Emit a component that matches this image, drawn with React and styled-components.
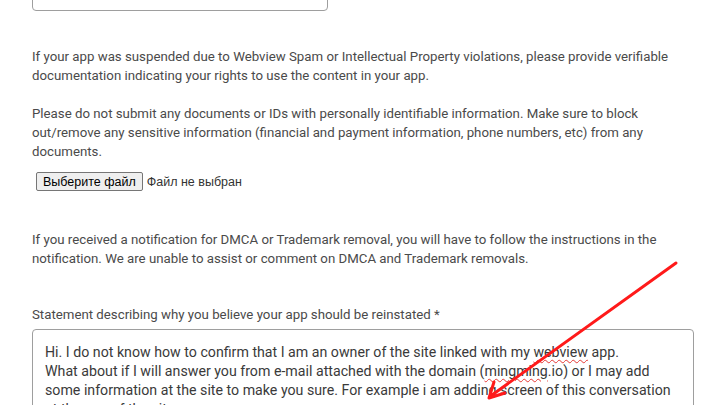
import React from "react";
import styled, { createGlobalStyle } from "styled-components";

const GlobalStyle = createGlobalStyle`
  html, body {
    margin: 0;
    padding: 0;
    background: #ffffff;
    overflow: hidden;
  }
  body {
    font-family: Roboto, "Noto Sans", Arial, sans-serif;
  }
`;

const Page = styled.div`
  position: relative;
  width: 720px;
  height: 405px;
  overflow: hidden;
  padding: 0 0 0 32px;
  box-sizing: border-box;
`;

const Form = styled.div`
  width: 662px;
  display: flex;
  flex-direction: column;
`;

const TopInput = styled.div`
  width: 296px;
  height: 30px;
  margin-top: -19px;
  box-sizing: border-box;
  border: 1px solid #9e9e9e;
  border-radius: 4px;
`;

const Text = styled.p`
  max-width: 640px;
  margin: ${(p) => p.$top || 0}px 0 0;
  font-size: 13.25px;
  line-height: 19px;
  color: #4a4a4a;
`;

const FileRow = styled.div`
  display: flex;
  align-items: center;
  gap: 4px;
  margin: 11px 0 0 4px;
  font-family: "Liberation Sans", Arial, sans-serif;
  font-size: 12.5px;
`;

const FileButton = styled.button`
  height: 19px;
  padding: 0 6px;
  font-family: "Liberation Sans", Arial, sans-serif;
  font-size: 12.5px;
  color: #000;
  background: #efefef;
  border: 1px solid #767676;
  border-radius: 2px;
`;

const FileLabel = styled.span`
  color: #333;
`;

const TextBox = styled.div`
  margin-top: 5px;
  width: 662px;
  height: 120px;
  box-sizing: border-box;
  padding: 13px 8px 0 12px;
  border: 1px solid #9e9e9e;
  border-radius: 4px;
  font-size: 14.2px;
  line-height: 19px;
  color: #3a3a3a;
  white-space: nowrap;
  overflow: hidden;
`;

const Misspelled = styled.span`
  text-decoration: underline wavy #e53935;
  text-decoration-thickness: 1px;
  text-underline-offset: 2px;
`;

const Arrow = styled.svg`
  position: absolute;
  left: 0;
  top: 0;
  pointer-events: none;
`;

export default function App() {
  return (
    <Page>
      <GlobalStyle />
      <Form>
        <TopInput />
        <Text $top={36}>
          If your app was suspended due to Webview Spam or Intellectual Property violations, please provide verifiable
          documentation indicating your rights to use the content in your app.
        </Text>
        <Text $top={19}>
          Please do not submit any documents or IDs with personally identifiable information. Make sure to block
          out/remove any sensitive information (financial and payment information, phone numbers, etc) from any
          documents.
        </Text>
        <FileRow>
          <FileButton type="button">Выберите файл</FileButton>
          <FileLabel>Файл не выбран</FileLabel>
        </FileRow>
        <Text $top={39}>
          If you received a notification for DMCA or Trademark removal, you will have to follow the instructions in the
          notification. We are unable to assist or comment on DMCA and Trademark removals.
        </Text>
        <Text $top={37}>Statement describing why you believe your app should be reinstated *</Text>
        <TextBox>
          Hi. I do not know how to confirm that I am an owner of the site linked with my <Misspelled>webview</Misspelled> app.
          <br />
          What about if I will answer you from e-mail attached with the domain (<Misspelled>mingming</Misspelled>.io) or I may add
          <br />
          some information at the site to make you sure. For example i am adding screen of this conversation
          <br />
          at the one of the site.
        </TextBox>
      </Form>
      <Arrow width="720" height="405" viewBox="0 0 720 405">
        <line x1="676" y1="263" x2="492" y2="395" stroke="#ff1a1a" strokeWidth="3" strokeLinecap="round" />
        <polyline points="494,382 489,398 505,393" fill="none" stroke="#ff1a1a" strokeWidth="3" strokeLinecap="round" strokeLinejoin="round" />
      </Arrow>
    </Page>
  );
}
